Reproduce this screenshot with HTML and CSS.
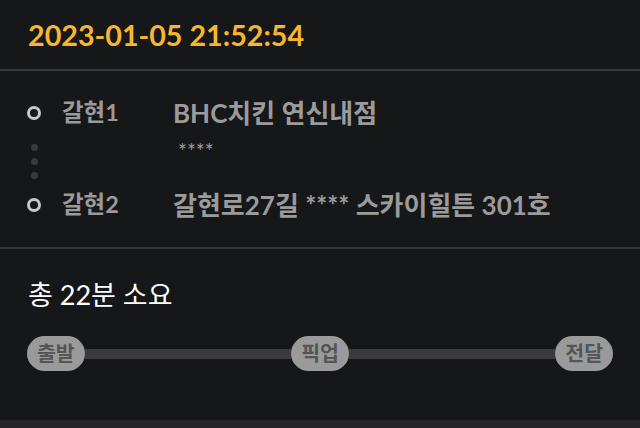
FILE: index.html
```html
<!DOCTYPE html>
<html lang="ko">
<head>
    <title>배달 상세</title>
    <link rel="stylesheet" href="styles.css">
</head>
<body>
    <div class="header">
        <span class="date">2023-01-05 21:52:54</span>
    </div>

    <div class="route">
        <div class="row">
            <span class="ring"></span>
            <span class="label">갈현1</span>
            <span class="addr">BHC치킨 연신내점</span>
        </div>
        <div class="row mid">
            <span class="dots"><i></i><i></i><i></i></span>
            <span class="label"></span>
            <span class="detail">****</span>
        </div>
        <div class="row">
            <span class="ring"></span>
            <span class="label">갈현2</span>
            <span class="addr">갈현로27길 **** 스카이힐튼 301호</span>
        </div>
    </div>

    <div class="summary">
        <p class="total">총 22분 소요</p>
        <div class="steps">
            <span class="step">출발</span>
            <span class="line"></span>
            <span class="step">픽업</span>
            <span class="line"></span>
            <span class="step">전달</span>
        </div>
    </div>

    <div class="footer"></div>
</body>
</html>
```

FILE: styles.css
```css
body {
    font-family: 'Lato', 'Noto Sans CJK KR', sans-serif;
    margin: 0;
    padding: 0;
    background: #161719;
    height: 428px;
    display: flex;
    flex-direction: column;
}
.header {
    height: 69px;
    display: flex;
    align-items: center;
    padding-left: 28px;
    border-bottom: 2px solid #38383b;
}
.date {
    color: #f8b62d;
    font-size: 28.7px;
    font-weight: bold;
}
.route {
    padding: 27px 0 27px 27px;
    border-bottom: 2px solid #38383b;
}
.row {
    display: flex;
    align-items: center;
    height: 30px;
}
.row.mid {
    height: 62px;
    align-items: flex-start;
}
.ring {
    width: 8px;
    height: 8px;
    border: 3px solid #c8c8c8;
    border-radius: 50%;
}
.label {
    width: 111px;
    margin-left: 21px;
    color: #9a9a9a;
    font-size: 23.5px;
    font-weight: bold;
}
.addr {
    color: #9b9b9b;
    font-size: 26px;
    font-weight: bold;
}
.row .label,
.row .addr {
    margin-top: -4px;
}
.dots {
    width: 14px;
    display: flex;
    flex-direction: column;
    align-items: center;
    gap: 7px;
    padding-top: 16px;
}
.dots i {
    width: 7px;
    height: 7px;
    border-radius: 50%;
    background: #3a3a3d;
}
.detail {
    color: #9b9b9b;
    font-size: 21px;
    margin-left: 5px;
    padding-top: 10px;
}
.summary {
    flex: 1;
    padding: 0 27px;
}
.total {
    color: #ffffff;
    font-size: 27px;
    margin: 25px 0 0 1px;
}
.steps {
    display: flex;
    align-items: center;
    margin-top: 23px;
}
.step {
    background: #9a9a9a;
    color: #555555;
    font-size: 20.5px;
    font-weight: bold;
    height: 35px;
    line-height: 35px;
    padding: 0 10px;
    border-radius: 18px;
}
.line {
    flex: 1;
    height: 10px;
    background: #3b3b3f;
}
.footer {
    height: 8px;
    background: #262629;
}
```
